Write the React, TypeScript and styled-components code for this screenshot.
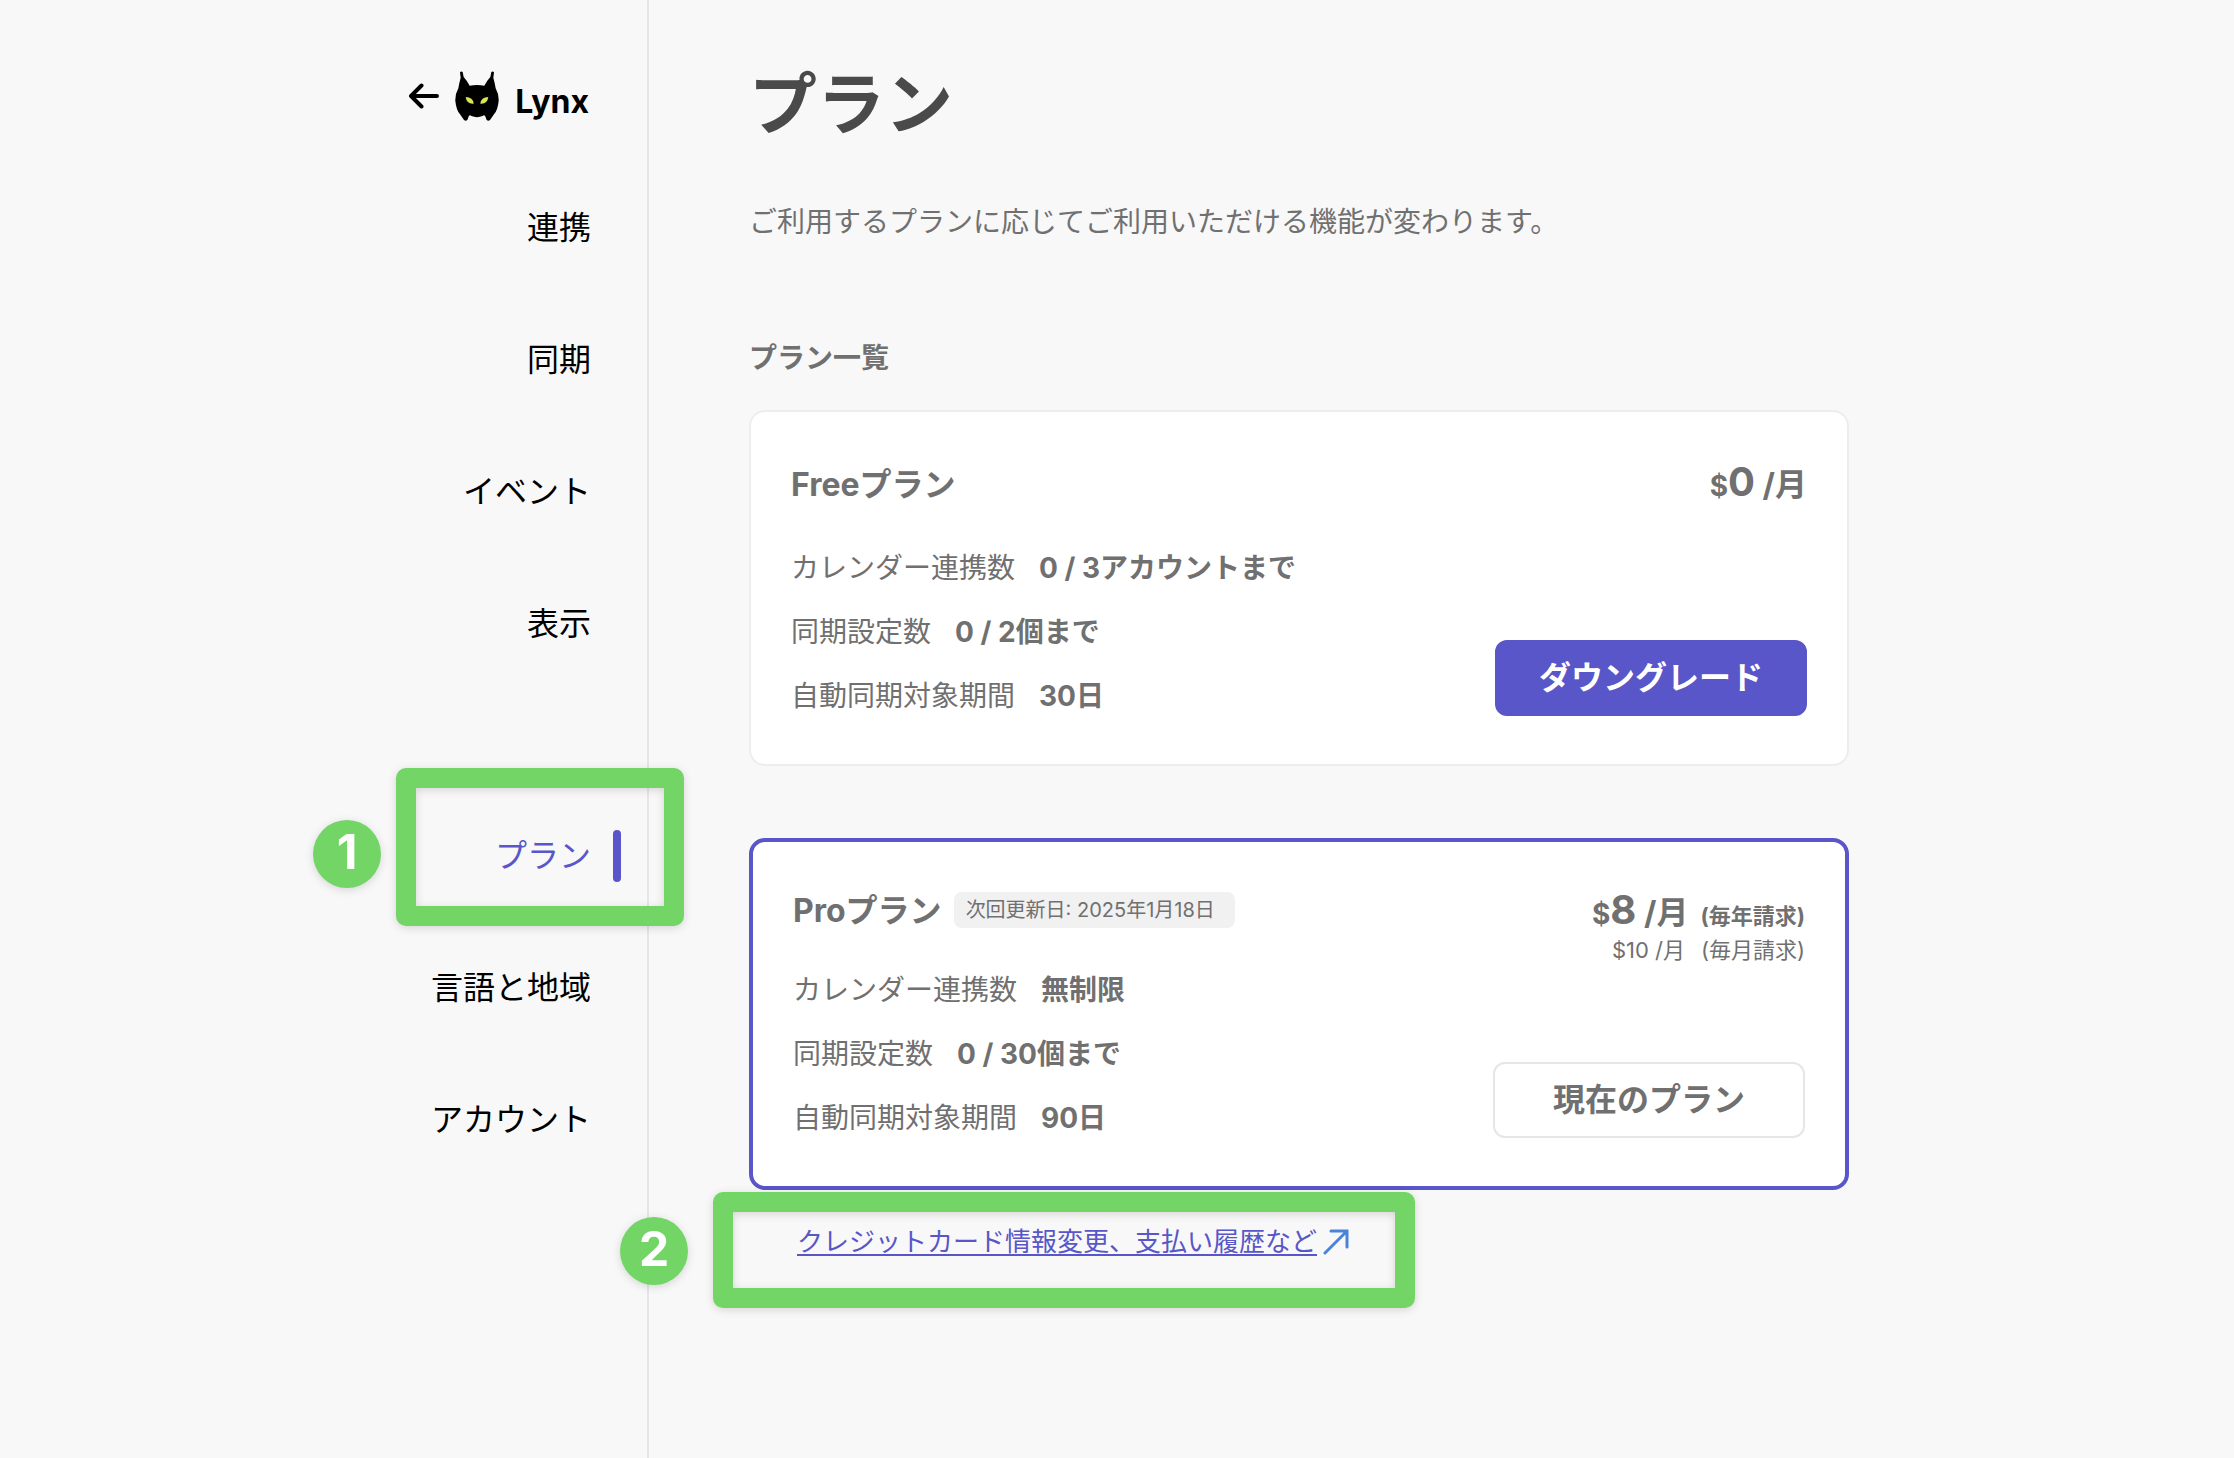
import React from "react";
import styled, { createGlobalStyle } from "styled-components";

const color = {
  page: "#f8f8f8",
  card: "#ffffff",
  line: "#e5e5ea",
  cardLine: "#ededed",
  ink: "#000000",
  heading: "#4a4a4a",
  text: "#707070",
  accent: "#5856c8",
  mark: "#72d565",
  chip: "#f1f1f1",
  arrow: "#4a84d8",
};

const GlobalStyle = createGlobalStyle`
  *, *::before, *::after { box-sizing: border-box; }
  body {
    margin: 0;
    background: ${color.page};
    color: ${color.text};
    font-family: Inter, "Noto Sans CJK JP", sans-serif;
    font-size: 28px;
    line-height: 40px;
  }
  h1, h2, h3, p, ul, dl, dd { margin: 0; padding: 0; }
  ul { list-style: none; }
  a { color: inherit; text-decoration: none; }
  button { font: inherit; cursor: pointer; }
`;

const Shell = styled.div`
  display: flex;
  max-width: 1464px;
  min-height: 100vh;
  margin: 0 auto;
`;

const Sidebar = styled.aside`
  flex: 0 0 264px;
  border-right: 2px solid ${color.line};
  padding-top: 71px;
  color: ${color.ink};
`;

const Brand = styled.a`
  display: flex;
  justify-content: flex-end;
  align-items: flex-end;
  padding-right: 58px;
  font-size: 32px;
  font-weight: 700;
  line-height: 38px;

  svg:first-child {
    align-self: center;
    margin-right: 16px;
  }
`;

const BrandName = styled.span`
  margin-left: 16px;
`;

const NavList = styled.ul`
  display: grid;
  gap: 80px;
  padding-top: 81px;

  & + & {
    padding-top: 180px;
  }
`;

const NavItem = styled.li`
  position: relative;
`;

const NavLink = styled.a<{ $active?: boolean }>`
  display: flex;
  justify-content: flex-end;
  gap: 22px;
  padding-right: ${(p) => (p.$active ? 26 : 56)}px;
  font-size: 32px;
  line-height: 52px;
  color: ${(p) => (p.$active ? color.accent : "inherit")};

  &::after {
    content: "";
    display: ${(p) => (p.$active ? "block" : "none")};
    width: 8px;
    border-radius: 4px;
    background: ${color.accent};
  }
`;

const Frame = styled.span<{ $inset: string }>`
  position: absolute;
  inset: ${(p) => p.$inset};
  pointer-events: none;
  border-radius: 10px;
  filter: drop-shadow(0 2px 4px rgba(0, 0, 0, 0.14));

  &::before {
    content: "";
    position: absolute;
    inset: 0;
    border: 20px solid ${color.mark};
    border-radius: 10px;
  }
`;

const Step = styled.span<{ $left: number; $top: number }>`
  position: absolute;
  top: ${(p) => p.$top}px;
  left: ${(p) => p.$left}px;
  display: grid;
  place-items: center;
  width: 68px;
  height: 68px;
  padding-bottom: 4px;
  border-radius: 50%;
  background: ${color.mark};
  color: #fff;
  font-size: 48px;
  font-weight: 700;
`;

const Main = styled.main`
  flex: 1;
  min-width: 0;
  padding: 62px 0 60px 100px;
`;

const Title = styled.h1`
  color: ${color.heading};
  font-size: 68px;
  font-weight: 700;
  line-height: 84px;
`;

const Lead = styled.p`
  margin-top: 56px;
`;

const SectionTitle = styled.h2`
  margin-top: 96px;
  font-size: 28px;
  font-weight: 700;
`;

const Plans = styled.div`
  display: grid;
  gap: 72px;
  margin-top: 32px;
`;

const Card = styled.article<{ $current?: boolean }>`
  display: flex;
  justify-content: space-between;
  padding: 40px 40px 48px;
  border: ${(p) => (p.$current ? `4px solid ${color.accent}` : `2px solid ${color.cardLine}`)};
  border-radius: 16px;
  background: ${color.card};
`;

const CardHead = styled.div<{ $current?: boolean }>`
  display: flex;
  align-items: center;
  gap: 12px;
  height: ${(p) => (p.$current ? 56 : 64)}px;
  margin-bottom: 28px;
`;

const PlanName = styled.h3`
  padding-top: 2px;
  font-size: 32px;
  font-weight: 700;
`;

const Chip = styled.span`
  padding: 0 20px 0 12px;
  border-radius: 8px;
  background: ${color.chip};
  font-size: 20px;
  line-height: 36px;
`;

const Limits = styled.dl`
  display: grid;
  gap: 20px;
`;

const Limit = styled.div`
  display: flex;
  gap: 24px;
  padding-top: 4px;

  dd {
    font-weight: 700;
  }
`;

const CardSide = styled.div`
  display: flex;
  flex-direction: column;
  justify-content: space-between;
  align-items: flex-end;
`;

const Price = styled.p<{ $current?: boolean }>`
  font-weight: 700;
  line-height: ${(p) => (p.$current ? 56 : 60)}px;
  text-align: right;
`;

const Amount = styled.span`
  font-size: 40px;
`;

const Per = styled.span`
  font-size: 32px;
  white-space: pre;
`;

const Note = styled.small`
  margin-left: 12px;
  font-size: 22px;
`;

const AltPrice = styled.p`
  margin-top: -10px;
  font-size: 22px;
  line-height: 32px;
  text-align: right;

  small {
    margin-left: 16px;
  }
`;

const PlanButton = styled.button<{ $current?: boolean }>`
  width: 312px;
  height: 76px;
  padding: 0;
  border: 2px solid ${(p) => (p.$current ? color.line : color.accent)};
  border-radius: 12px;
  background: ${(p) => (p.$current ? color.card : color.accent)};
  color: ${(p) => (p.$current ? color.text : "#fff")};
  font-size: 32px;
  font-weight: 700;
`;

const Billing = styled.div`
  position: relative;
  width: fit-content;
  margin: 32px 0 0 48px;
`;

const BillingLink = styled.a`
  display: flex;
  align-items: center;
  gap: 6px;
  color: ${color.accent};
  font-size: 26px;

  span {
    text-decoration: underline;
    text-decoration-thickness: 2px;
    text-underline-offset: 3px;
    text-decoration-skip-ink: none;
  }
`;

const BackArrow = () => (
  <svg width="30" height="26" viewBox="0 0 30 26" fill="none" stroke="currentColor" strokeWidth="4" strokeLinecap="round" strokeLinejoin="round" aria-hidden="true">
    <path d="M28 13H2M12.500 2.500L2 13l10.500 10.500" />
  </svg>
);

const LynxLogo = () => (
  <svg width="44" height="50" viewBox="0 0 132 150" aria-hidden="true">
    <path
      d="M15 4Q18 0 23 3L26 18Q36 29 44 44Q66 40 88 44Q96 29 106 18L109 3Q114 0 117 4L115 20Q120 38 122 52Q132 70 131 90Q128 118 117 130L105 147Q100 152 95 147L90 134Q86 131 83 135Q66 142 49 135Q46 131 42 134L37 147Q32 152 27 147L15 130Q4 118 1 90Q0 70 10 52Q12 38 17 20Z"
      fill="#000"
    />
    <path d="M32 78Q54 78 56 98Q35 100 32 78ZM100 78Q78 78 76 98Q97 100 100 78Z" fill="#d9e552" />
  </svg>
);

const OpenArrow = () => (
  <svg width="26" height="26" viewBox="0 0 26 26" fill="none" stroke={color.arrow} strokeWidth="3" strokeLinecap="round" strokeLinejoin="miter" aria-hidden="true">
    <path d="M2 24L24 2M8 2H24V18" />
  </svg>
);

type Plan = {
  name: string;
  renewal?: string;
  price: string;
  note?: string;
  alt?: { price: string; note: string };
  action: string;
  current?: boolean;
  limits: [string, string][];
};

const plans: Plan[] = [
  {
    name: "Freeプラン",
    price: "0",
    action: "ダウングレード",
    limits: [
      ["カレンダー連携数", "0 / 3アカウントまで"],
      ["同期設定数", "0 / 2個まで"],
      ["自動同期対象期間", "30日"],
    ],
  },
  {
    name: "Proプラン",
    renewal: "次回更新日: 2025年1月18日",
    price: "8",
    note: "(毎年請求)",
    alt: { price: "$10 /月", note: "(毎月請求)" },
    action: "現在のプラン",
    current: true,
    limits: [
      ["カレンダー連携数", "無制限"],
      ["同期設定数", "0 / 30個まで"],
      ["自動同期対象期間", "90日"],
    ],
  },
];

const PlanCard = ({ plan }: { plan: Plan }) => (
  <Card $current={plan.current}>
    <div>
      <CardHead $current={plan.current}>
        <PlanName>{plan.name}</PlanName>
        {plan.renewal && <Chip>{plan.renewal}</Chip>}
      </CardHead>
      <Limits>
        {plan.limits.map(([label, value]) => (
          <Limit key={label}>
            <dt>{label}</dt>
            <dd>{value}</dd>
          </Limit>
        ))}
      </Limits>
    </div>
    <CardSide>
      <div>
        <Price $current={plan.current}>
          $<Amount>{plan.price}</Amount>
          <Per> /月</Per>
          {plan.note && <Note>{plan.note}</Note>}
        </Price>
        {plan.alt && (
          <AltPrice>
            {plan.alt.price}
            <Note>{plan.alt.note}</Note>
          </AltPrice>
        )}
      </div>
      <PlanButton type="button" $current={plan.current}>
        {plan.action}
      </PlanButton>
    </CardSide>
  </Card>
);

export default function App() {
  return (
    <>
      <GlobalStyle />
      <Shell>
        <Sidebar>
          <Brand href="#home">
            <BackArrow />
            <LynxLogo />
            <BrandName>Lynx</BrandName>
          </Brand>
          <nav>
            <NavList>
              {["連携", "同期", "イベント", "表示"].map((label) => (
                <NavItem key={label}>
                  <NavLink href="#settings">{label}</NavLink>
                </NavItem>
              ))}
            </NavList>
            <NavList>
              <NavItem>
                <NavLink href="#plan" $active aria-current="page">
                  プラン
                </NavLink>
                <Frame $inset="-62px -37px -44px 11px">
                  <Step $left={-83} $top={52}>1</Step>
                </Frame>
              </NavItem>
              {["言語と地域", "アカウント"].map((label) => (
                <NavItem key={label}>
                  <NavLink href="#settings">{label}</NavLink>
                </NavItem>
              ))}
            </NavList>
          </nav>
        </Sidebar>
        <Main>
          <Title>プラン</Title>
          <Lead>ご利用するプランに応じてご利用いただける機能が変わります。</Lead>
          <SectionTitle>プラン一覧</SectionTitle>
          <Plans>
            {plans.map((plan) => (
              <PlanCard key={plan.name} plan={plan} />
            ))}
          </Plans>
          <Billing>
            <BillingLink href="#billing">
              <span>クレジットカード情報変更、支払い履歴など</span>
              <OpenArrow />
            </BillingLink>
            <Frame $inset="-30px -66px -46px -84px">
              <Step $left={-93} $top={25}>2</Step>
            </Frame>
          </Billing>
        </Main>
      </Shell>
    </>
  );
}
